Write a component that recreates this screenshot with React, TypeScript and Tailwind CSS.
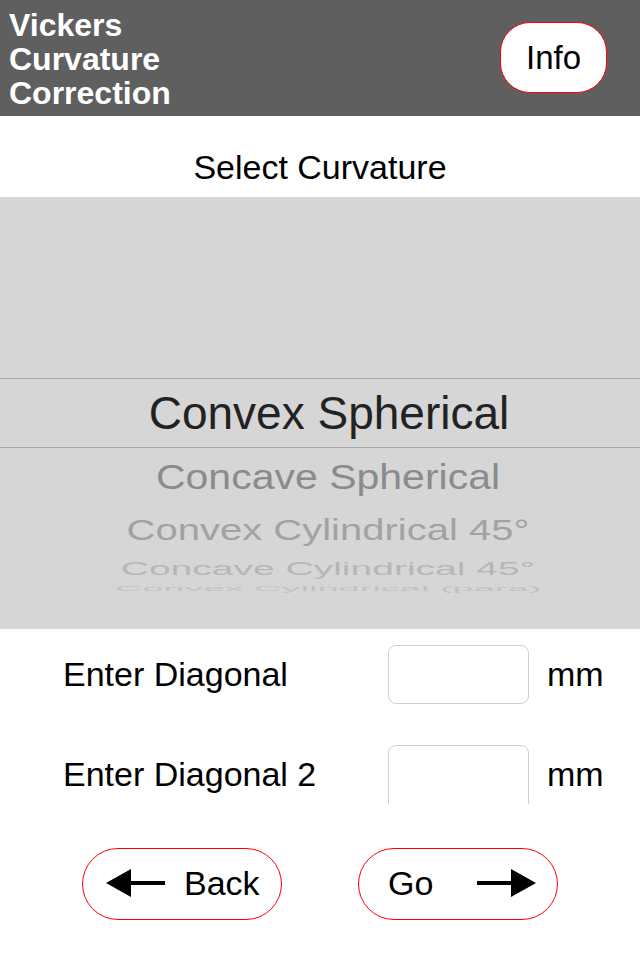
const FONT = { fontFamily: '"Liberation Sans", Arial, Helvetica, sans-serif' };

function Arrow({ dir }: { dir: "left" | "right" }) {
  return (
    <svg width="60" height="28" viewBox="0 0 60 28" aria-hidden>
      {dir === "left" ? (
        <>
          <polygon points="0,14 25,0 25,28" fill="#000" />
          <rect x="20" y="12" width="39" height="4" fill="#000" />
        </>
      ) : (
        <>
          <polygon points="60,14 35,0 35,28" fill="#000" />
          <rect x="1" y="12" width="39" height="4" fill="#000" />
        </>
      )}
    </svg>
  );
}

function Field({ label, clipped }: { label: string; clipped?: boolean }) {
  return (
    <div className="flex h-[59px] items-center">
      <div className="w-[388px] pl-[63px] text-[34px] text-black">{label}</div>
      <div className="h-[59px] w-[141px] overflow-hidden">
        <div
          className={`w-[141px] rounded-[8px] border border-[#cfcfcf] bg-white ${
            clipped ? "h-[66px]" : "h-[59px]"
          }`}
        />
      </div>
      <div className="pl-[18px] text-[34px] text-black">mm</div>
    </div>
  );
}

export default function App() {
  return (
    <div className="flex h-[960px] w-[640px] flex-col overflow-hidden bg-white" style={FONT}>
      {/* top bar */}
      <header className="flex h-[116px] items-center justify-between bg-[#5f5f5f] pl-[9px] pr-[33px]">
        <h1 className="pt-[1px] text-[32px] font-bold leading-[34px] text-white">
          Vickers
          <br />
          Curvature
          <br />
          Correction
        </h1>
        <button className="mb-[1px] h-[71px] w-[107px] rounded-[30px] border border-[#ff0000] bg-white text-[33px] text-black">
          Info
        </button>
      </header>

      <div className="flex h-[81px] items-center justify-center pt-[22px] text-[34px] text-black">
        Select Curvature
      </div>

      {/* picker wheel */}
      <div className="flex h-[432px] flex-col overflow-hidden bg-[#d6d6d6]">
        <div className="h-[181px] shrink-0" />
        <div className="flex h-[70px] shrink-0 items-center justify-center border-y border-[#a9a9a9] pl-[18px] text-[46px] text-[#222]">
          Convex Spherical
        </div>
        <div className="flex h-[58px] shrink-0 items-center justify-center pl-[16px]">
          <span className="inline-block scale-y-[0.85] text-[41px] leading-none text-[#8b8b8b]">
            Concave Spherical
          </span>
        </div>
        <div className="flex h-[48px] shrink-0 items-center justify-center pl-[16px]">
          <span className="inline-block scale-y-[0.72] text-[40px] leading-none text-[#a2a2a2]">
            Convex Cylindrical 45°
          </span>
        </div>
        <div className="flex h-[28px] shrink-0 items-center justify-center pl-[16px]">
          <span className="inline-block scale-y-[0.46] text-[39px] leading-none text-[#b6b6b6]">
            Concave Cylindrical 45°
          </span>
        </div>
        <div className="flex h-[12px] shrink-0 items-center justify-center pl-[16px]">
          <span className="inline-block scale-y-[0.2] text-[38px] leading-none text-[#c2c2c2]">
            Convex Cylindrical (para)
          </span>
        </div>
      </div>

      {/* inputs */}
      <div className="flex flex-col gap-[41px] pt-[16px]">
        <Field label="Enter Diagonal" />
        <Field label="Enter Diagonal 2" clipped />
      </div>

      {/* nav buttons */}
      <div className="flex gap-[76px] pl-[82px] pt-[44px]">
        <button className="flex h-[72px] w-[200px] items-center rounded-[36px] border border-[#ff0000] bg-white pl-[23px] pb-[2px] text-[34px] text-black">
          <Arrow dir="left" />
          <span className="pl-[18px]">Back</span>
        </button>
        <button className="flex h-[72px] w-[200px] items-center rounded-[36px] border border-[#ff0000] bg-white pl-[29px] pb-[2px] text-[34px] text-black">
          <span>Go</span>
          <span className="pl-[43px]">
            <Arrow dir="right" />
          </span>
        </button>
      </div>
    </div>
  );
}
